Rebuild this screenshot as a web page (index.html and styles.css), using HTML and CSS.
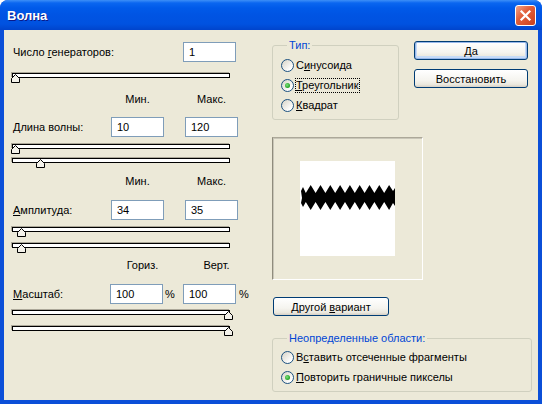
FILE: index.html
```html
<!DOCTYPE html>
<html lang="ru">

<head>
    <meta charset="UTF-8">
    <meta name="viewport" content="width=device-width, initial-scale=1.0">
    <title>Волна</title>

    <link rel="stylesheet" href="styles.css">
</head>

<body>
    <div class="window">
        <div class="titlebar">
            <span class="title">Волна</span>
            <button class="close">
                <svg width="19" height="19" viewBox="0 0 19 19">
                    <path d="M5.5 5.5 L13.5 13.5 M13.5 5.5 L5.5 13.5" stroke="#fff" stroke-width="2.2" stroke-linecap="square" />
                </svg>
            </button>
        </div>

        <div class="client">
            <!-- параметры -->
            <div class="params">
                <div class="row row-gen">
                    <label>Число <u>г</u>енераторов:</label>
                    <input class="field" value="1">
                </div>
                <div class="slider gap-11">
                    <svg class="thumb" style="left:-2px" width="9" height="9"><polygon points="4.5,0.5 8.5,4.5 8.5,8.5 0.5,8.5 0.5,4.5" /></svg>
                </div>

                <div class="heads gap-15"><span>Мин.</span><span>Макс.</span></div>
                <div class="row row-range gap-11">
                    <label><u>Д</u>лина волны:</label>
                    <input class="field" value="10">
                    <input class="field" value="120">
                </div>
                <div class="slider gap-7">
                    <svg class="thumb" style="left:-2px" width="9" height="9"><polygon points="4.5,0.5 8.5,4.5 8.5,8.5 0.5,8.5 0.5,4.5" /></svg>
                </div>
                <div class="slider gap-9">
                    <svg class="thumb" style="left:23px" width="9" height="9"><polygon points="4.5,0.5 8.5,4.5 8.5,8.5 0.5,8.5 0.5,4.5" /></svg>
                </div>

                <div class="heads gap-12"><span>Мин.</span><span>Макс.</span></div>
                <div class="row row-range gap-12">
                    <label><u>А</u>мплитуда:</label>
                    <input class="field" value="34">
                    <input class="field" value="35">
                </div>
                <div class="slider gap-7">
                    <svg class="thumb" style="left:4px" width="9" height="9"><polygon points="4.5,0.5 8.5,4.5 8.5,8.5 0.5,8.5 0.5,4.5" /></svg>
                </div>
                <div class="slider gap-11">
                    <svg class="thumb" style="left:4px" width="9" height="9"><polygon points="4.5,0.5 8.5,4.5 8.5,8.5 0.5,8.5 0.5,4.5" /></svg>
                </div>

                <div class="heads heads-scale gap-11"><span>Гориз.</span><span>Верт.</span></div>
                <div class="row row-scale gap-12">
                    <label><u>М</u>асштаб:</label>
                    <input class="field" value="100">
                    <span class="pct">%</span>
                    <input class="field" value="100">
                    <span class="pct">%</span>
                </div>
                <div class="slider gap-6">
                    <svg class="thumb" style="left:211px" width="9" height="9"><polygon points="4.5,0.5 8.5,4.5 8.5,8.5 0.5,8.5 0.5,4.5" /></svg>
                </div>
                <div class="slider gap-11">
                    <svg class="thumb" style="left:211px" width="9" height="9"><polygon points="4.5,0.5 8.5,4.5 8.5,8.5 0.5,8.5 0.5,4.5" /></svg>
                </div>
            </div>

            <!-- правая часть -->
            <div class="side">
                <div class="side-top">
                    <fieldset class="group group-type">
                        <legend>Тип:</legend>
                        <div class="opt"><span class="radio"></span><span>С<u>и</u>нусоида</span></div>
                        <div class="opt"><span class="radio on"></span><span class="focus"><u>Т</u>реугольник</span></div>
                        <div class="opt"><span class="radio"></span><span><u>К</u>вадрат</span></div>
                    </fieldset>
                    <div class="buttons">
                        <button class="btn btn-default"><u>Д</u>а</button>
                        <button class="btn">Восстановить</button>
                    </div>
                </div>

                <div class="preview">
                    <div class="canvas">
                        <svg width="95" height="95" viewBox="0 0 95 95">
                            <polygon fill="#000" points="1,30 3,26 5.8,32 10.7,24 15.6,32 20.5,24 25.4,32 30.3,24 35.2,32 40.1,24 45,32 49.9,24 54.8,32 59.7,24 64.6,32 69.5,24 74.4,32 79.3,24 84.2,32 89.1,24 93,30 95,27 95,45 93,42 89.1,49 84.2,41 79.3,49 74.4,41 69.5,49 64.6,41 59.7,49 54.8,41 49.9,49 45,41 40.1,49 35.2,41 30.3,49 25.4,41 20.5,49 15.6,41 10.7,49 5.8,41 3,46 1,42 2,37" />
                        </svg>
                    </div>
                </div>

                <button class="btn btn-random">Другой <u>в</u>ариант</button>

                <fieldset class="group group-edges">
                    <legend>Неопределенные области:</legend>
                    <div class="opt"><span class="radio"></span><span>В<u>с</u>тавить отсеченные фрагменты</span></div>
                    <div class="opt"><span class="radio on"></span><span><u>П</u>овторить граничные пикселы</span></div>
                </fieldset>
            </div>
        </div>
    </div>
</body>

</html>
```

FILE: styles.css
```css
body {
    margin: 0;
    background-color: #fff;
    font-family: "Liberation Sans", Arial, sans-serif;
    font-size: 11px;
    color: #000;
}

.window {
    width: 542px;
    height: 404px;
    background-color: #0b4fd8;
    border-radius: 8px 8px 0 0;
    display: flex;
    flex-direction: column;
}

.titlebar {
    height: 30px;
    flex: none;
    display: flex;
    align-items: flex-start;
    justify-content: space-between;
    border-radius: 8px 8px 0 0;
    background: linear-gradient(#3d8ff7 0, #0a66f0 3px, #005ae9 8px, #0054e3 50%, #0052e0 80%, #0044cc 100%);
}

.title {
    margin: 8px 0 0 7px;
    color: #fff;
    font-weight: bold;
    font-size: 13px;
    line-height: 15px;
    text-shadow: 1px 1px 0 #0a1a8a;
}

.close {
    width: 21px;
    height: 21px;
    margin: 5px 6px 0 0;
    padding: 0;
    border: 1px solid #fff;
    border-radius: 3px;
    background: linear-gradient(135deg, #f0a48a 0%, #e2603c 40%, #c8401c 100%);
    display: flex;
    align-items: center;
    justify-content: center;
}

.client {
    flex: 1;
    margin: 0 4px 4px 4px;
    background-color: #ece9d8;
    display: flex;
    padding-left: 8px;
}

u {
    text-decoration: underline;
    text-underline-offset: 1px;
}

/* левая колонка */

.params {
    width: 226px;
    padding-top: 12px;
    display: flex;
    flex-direction: column;
}

.row {
    display: grid;
    align-items: center;
    height: 20px;
}

.row label {
    padding-left: 1px;
}

.row-gen {
    grid-template-columns: 171px 53px;
}

.row-range {
    grid-template-columns: 99px 53px 21px 53px;
}

.row-range .field:last-child {
    grid-column: 4;
}

.row-scale {
    grid-template-columns: 98px 53px 20px 53px 14px;
}

.pct {
    padding-left: 2px;
}

.row-scale .pct:last-child {
    padding-left: 3px;
}

.field {
    box-sizing: border-box;
    width: 53px;
    height: 20px;
    border: 1px solid #7f9db9;
    padding: 0 0 0 5px;
    background-color: #fff;
    font: inherit;
    color: #000;
}

.heads {
    display: grid;
    grid-template-columns: 53px 21px 53px;
    padding-left: 99px;
    line-height: 13px;
    text-align: center;
}

.heads span:last-child {
    grid-column: 3;
}

.heads-scale {
    padding-left: 104px;
}

.slider {
    position: relative;
    box-sizing: border-box;
    width: 218px;
    height: 5px;
    border: 1px solid #000;
    background-color: #fff;
    box-shadow: -1px -1px 0 #aca899;
}

.thumb {
    position: absolute;
    top: 0;
    display: block;
}

.thumb polygon {
    fill: #f4f2ea;
    stroke: #000;
    stroke-width: 1;
}

.gap-6 { margin-top: 6px; }
.gap-7 { margin-top: 7px; }
.gap-9 { margin-top: 9px; }
.gap-11 { margin-top: 11px; }
.gap-12 { margin-top: 12px; }
.gap-15 { margin-top: 15px; }

/* правая колонка */

.side {
    width: 260px;
    margin-left: 34px;
    padding-top: 9px;
    display: flex;
    flex-direction: column;
    align-items: flex-start;
}

.side-top {
    display: flex;
    align-items: flex-start;
}

.group {
    margin: 0;
    min-width: 0;
    border: 1px solid #d0d0bf;
    border-radius: 3px;
    padding: 3px 0 4px 8px;
}

.group legend {
    margin-left: 6px;
    padding: 0 2px;
    color: #0046d5;
    line-height: 13px;
}

.group-type {
    box-sizing: border-box;
    width: 127px;
}

.group-edges {
    box-sizing: border-box;
    width: 260px;
    margin-top: 16px;
    padding-top: 2px;
}

.opt {
    display: flex;
    align-items: center;
    gap: 2px;
    height: 20px;
}

.radio {
    box-sizing: border-box;
    width: 13px;
    height: 13px;
    border: 1px solid #1c5180;
    border-radius: 50%;
    background: linear-gradient(135deg, #d6d3c6, #fff 80%);
    display: flex;
    align-items: center;
    justify-content: center;
}

.radio.on::after {
    content: "";
    width: 5px;
    height: 5px;
    border-radius: 50%;
    background: radial-gradient(circle at 40% 40%, #7ee07e, #21a121 70%);
}

.focus {
    outline: 1px dotted #000;
    outline-offset: 0;
    line-height: 13px;
}

.buttons {
    display: flex;
    flex-direction: column;
    gap: 9px;
    margin: 2px 0 0 15px;
}

.btn {
    box-sizing: border-box;
    width: 114px;
    height: 19px;
    padding: 0;
    border: 1px solid #003c74;
    border-radius: 3px;
    background: linear-gradient(#fff 0%, #f5f4ef 60%, #ebe8de 85%, #d6d0c5 100%);
    font: inherit;
    color: #000;
}

.btn-default {
    box-shadow: inset 0 0 0 1px #98b8ea, inset 0 -1px 0 2px #c6dbf7;
}

.btn-random {
    width: 116px;
    margin: 17px 0 0 1px;
}

.preview {
    box-sizing: border-box;
    width: 151px;
    height: 143px;
    margin-top: 17px;
    border: 1px solid;
    border-color: #aca899 #fff #fff #8f8c7d;
    box-shadow: inset 1px 1px 0 #c9c6b8;
    display: flex;
    align-items: center;
    justify-content: center;
}

.canvas {
    width: 95px;
    height: 95px;
    background-color: #fff;
}

.canvas svg {
    display: block;
}
```
